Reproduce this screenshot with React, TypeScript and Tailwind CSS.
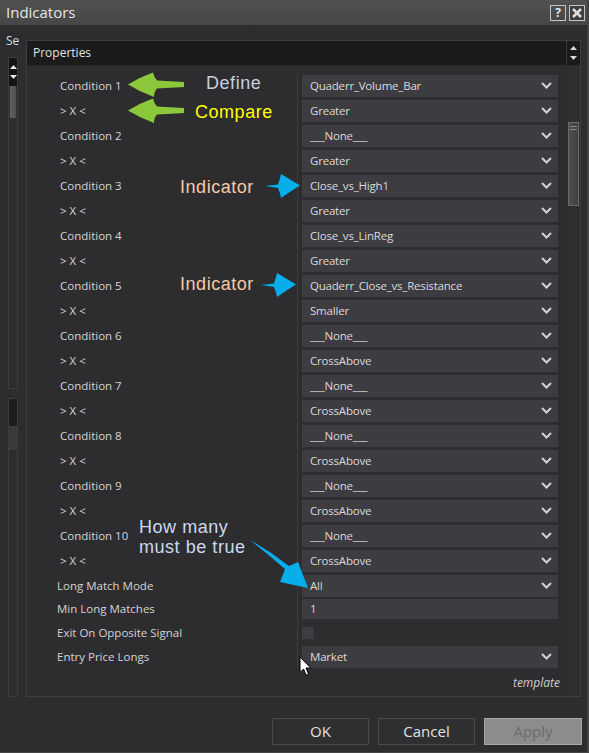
import React from 'react';

type Row = { label: string; value: string };

const conditionRows: Row[] = [
  { label: 'Condition 1', value: 'Quaderr_Volume_Bar' },
  { label: '> X <', value: 'Greater' },
  { label: 'Condition 2', value: '___None___' },
  { label: '> X <', value: 'Greater' },
  { label: 'Condition 3', value: 'Close_vs_High1' },
  { label: '> X <', value: 'Greater' },
  { label: 'Condition 4', value: 'Close_vs_LinReg' },
  { label: '> X <', value: 'Greater' },
  { label: 'Condition 5', value: 'Quaderr_Close_vs_Resistance' },
  { label: '> X <', value: 'Smaller' },
  { label: 'Condition 6', value: '___None___' },
  { label: '> X <', value: 'CrossAbove' },
  { label: 'Condition 7', value: '___None___' },
  { label: '> X <', value: 'CrossAbove' },
  { label: 'Condition 8', value: '___None___' },
  { label: '> X <', value: 'CrossAbove' },
  { label: 'Condition 9', value: '___None___' },
  { label: '> X <', value: 'CrossAbove' },
  { label: 'Condition 10', value: '___None___' },
  { label: '> X <', value: 'CrossAbove' },
];

function Chevron() {
  return (
    <svg width="11" height="7" viewBox="0 0 11 7" className="shrink-0">
      <polyline points="1,1 5.5,5.5 10,1" fill="none" stroke="#d2d2d2" strokeWidth="2" />
    </svg>
  );
}

function Dropdown({ value }: { value: string }) {
  return (
    <div className="flex h-[22px] w-[256px] items-center justify-between bg-[#3c3c41] pl-[8px] pr-[6px] tracking-[-0.2px] text-[#dadada]">
      <span className="whitespace-nowrap">{value}</span>
      <Chevron />
    </div>
  );
}

function PropRow({ label, children, indent = 'pl-[33px]', height = 'h-[25px]' }: { label: string; children: React.ReactNode; indent?: string; height?: string }) {
  return (
    <div className={`flex ${height}`}>
      <div className={`flex w-[270px] items-center ${indent} whitespace-nowrap text-[#d4d4d4]`}>{label}</div>
      <div className="flex flex-1 items-center border-l border-[#3d3d3f] pl-[4px] pr-[8px]">{children}</div>
    </div>
  );
}

function TinyArrows({ color = '#e8e8e8' }: { color?: string }) {
  return (
    <div className="flex flex-col items-center gap-[6px]">
      <svg width="7" height="4" viewBox="0 0 7 4">
        <polygon points="0,4 3.5,0 7,4" fill={color} />
      </svg>
      <svg width="7" height="4" viewBox="0 0 7 4">
        <polygon points="0,0 7,0 3.5,4" fill={color} />
      </svg>
    </div>
  );
}

function GreenArrow({ className }: { className: string }) {
  return (
    <svg width="60" height="28" viewBox="0 0 60 28" className={className}>
      <path
        d="M2 13.5 Q14 6 27 1.5 Q28 6 31 9.5 L58 11 L58 16 L31 17.5 Q28 21 28 26 Q14 21 2 13.5 Z"
        fill="#8cc83c"
      />
    </svg>
  );
}

function BlueArrow({ className }: { className: string }) {
  return (
    <svg width="38" height="26" viewBox="0 0 38 26" className={className}>
      <path
        d="M1 13 L14 11.5 Q16 6 17 1 Q27 7 36 12.5 Q27 18 17 25 Q16 19.5 14 15 Z"
        fill="#06aeea"
      />
    </svg>
  );
}

function Cursor() {
  return (
    <svg width="13" height="21" viewBox="0 0 13 21" className="absolute left-[299px] top-[656px]">
      <path d="M1 1 L1 16.5 L4.5 13 L7.2 19.2 L9.6 18.2 L7 12 L11.8 12 Z" fill="#ffffff" stroke="#000000" strokeWidth="1" strokeLinejoin="round" />
    </svg>
  );
}

export default function App() {
  return (
    <div className="relative h-[753px] w-[589px] overflow-hidden border-b border-r-2 border-[#444447] bg-[#2d2d30] font-['Open_Sans',sans-serif] text-[11.5px] leading-none">
      {/* title bar */}
      <div className="flex h-[25px] items-center justify-between bg-gradient-to-b from-[#515151] to-[#464646] pl-[6px] pr-[2px]">
        <span className="text-[15px] text-[#e6e6e6]">Indicators</span>
        <div className="flex gap-[3px]">
          <div className="flex h-[16px] w-[16px] items-center justify-center border border-[#c4c4c4] text-[12px] font-bold text-[#e8e8e8]">?</div>
          <div className="flex h-[16px] w-[16px] items-center justify-center border border-[#c4c4c4] bg-[#3e3e3e]">
            <svg width="10" height="10" viewBox="0 0 10 10">
              <path d="M1 1 L9 9 M9 1 L1 9" stroke="#dcdcdc" strokeWidth="2.6" />
            </svg>
          </div>
        </div>
      </div>

      {/* body */}
      <div className="flex h-[672px] pt-[8px]">
        <div className="flex w-[26px] flex-col">
          <div className="h-[16px] pl-[6px] text-[12px] leading-[16px] text-[#cfdbe8]">Se</div>
          <div className="ml-[8px] mt-[8px] flex w-[10px] flex-1 flex-col">
            <div className="flex h-[332px] flex-col border border-[#3d3d40]">
              <div className="flex h-[28px] items-center justify-center bg-[#141414]">
                <TinyArrows />
              </div>
              <div className="mx-[1px] h-[32px] bg-gradient-to-r from-[#616161] to-[#525252]" />
            </div>
            <div className="mt-[9px] flex flex-1 flex-col border border-[#3d3d40]">
              <div className="h-[27px] bg-[#1c1c1c]" />
              <div className="h-[24px] bg-[#3a3a3c]" />
            </div>
          </div>
        </div>

        {/* properties panel */}
        <div className="mt-[7px] flex w-[555px] flex-col border border-[#3e3e41]">
          <div className="flex h-[25px] border-b border-[#2a2a2a]">
            <div className="flex flex-1 items-center bg-[#1b1b1b] pl-[6px] text-[12px] text-[#e2e2e2]">Properties</div>
            <div className="flex w-[14px] items-center justify-center border-l border-[#3a3a3a] bg-[#1b1b1b]">
              <TinyArrows color="#d8d8d8" />
            </div>
          </div>

          <div className="flex flex-1">
            <div className="flex flex-1 flex-col pt-[7px]">
              {conditionRows.map((r, i) => (
                <PropRow key={i} label={r.label}>
                  <Dropdown value={r.value} />
                </PropRow>
              ))}
              <PropRow label="Long Match Mode" indent="pl-[30px]">
                <Dropdown value="All" />
              </PropRow>
              <PropRow label="Min Long Matches" indent="pl-[30px]" height="h-[22px]">
                <div className="flex h-[20px] w-[256px] items-center bg-[#3c3c41] pl-[8px] text-[#dadada]">1</div>
              </PropRow>
              <PropRow label="Exit On Opposite Signal" indent="pl-[30px]">
                <div className="h-[12px] w-[12px] bg-[#3c3c41]" />
              </PropRow>
              <PropRow label="Entry Price Longs" indent="pl-[30px]" height="h-[23px]">
                <Dropdown value="Market" />
              </PropRow>
              <div className="flex justify-end pr-[6px] pt-[9px] text-[12px] italic text-[#cfcfcf]">template</div>
            </div>

            {/* scrollbar */}
            <div className="w-[14px] border-l border-[#28282a] bg-[#2f2f32] pt-[56px]">
              <div className="relative mx-[1px] h-[84px] border border-[#6b6b6b] bg-gradient-to-r from-[#505050] to-[#3e3e3e]">
                <div className="mx-auto mt-[3px] w-[7px] border-t border-[#8a8a8a]" />
                <div className="mx-auto mt-[2px] w-[7px] border-t border-[#8a8a8a]" />
              </div>
            </div>
          </div>
        </div>
      </div>

      {/* buttons */}
      <div className="flex justify-end gap-[9px] pr-[5px] pt-[21px]">
        <button className="flex h-[27px] w-[97px] items-center justify-center border border-[#49494c] bg-[#2f2f32] text-[15px] text-[#e2e2e2]">OK</button>
        <button className="flex h-[27px] w-[97px] items-center justify-center border border-[#49494c] bg-[#2f2f32] text-[15px] text-[#e2e2e2]">Cancel</button>
        <button className="flex h-[27px] w-[98px] items-center justify-center border border-[#a8a8a8] bg-[#8c8c8c] text-[15px] text-[#6b6b6b]">Apply</button>
      </div>

      {/* annotations */}
      <GreenArrow className="absolute left-[126px] top-[71px]" />
      <GreenArrow className="absolute left-[126px] top-[97px]" />
      <span className="absolute left-[206px] top-[74px] font-['Liberation_Sans',sans-serif] text-[18px] tracking-[0.03em] text-[#c6cfde]">Define</span>
      <span className="absolute left-[195px] top-[103px] font-['Liberation_Sans',sans-serif] text-[18px] tracking-[0.03em] text-[#ffff00]">Compare</span>

      <span className="absolute left-[180px] top-[178px] font-['Liberation_Sans',sans-serif] text-[18px] tracking-[0.03em] text-[#f6c9a9]">Indicator</span>
      <BlueArrow className="absolute left-[264px] top-[173px]" />
      <span className="absolute left-[180px] top-[275px] font-['Liberation_Sans',sans-serif] text-[18px] tracking-[0.03em] text-[#f6c9a9]">Indicator</span>
      <BlueArrow className="absolute left-[260px] top-[272px]" />

      <div className="absolute left-[139px] top-[517px] font-['Liberation_Sans',sans-serif] text-[18px] leading-[20px] tracking-[0.03em] text-[#cad9ef]">
        <div>How many</div>
        <div>must be true</div>
      </div>
      <svg width="70" height="60" viewBox="245 535 70 60" className="absolute left-[245px] top-[535px]">
        <path d="M250 540 Q268 554 285 569 L280 582 L308 588 L298 562 L289 566 Q270 551 250 540 Z" fill="#06aeea" />
      </svg>

      <Cursor />
    </div>
  );
}
